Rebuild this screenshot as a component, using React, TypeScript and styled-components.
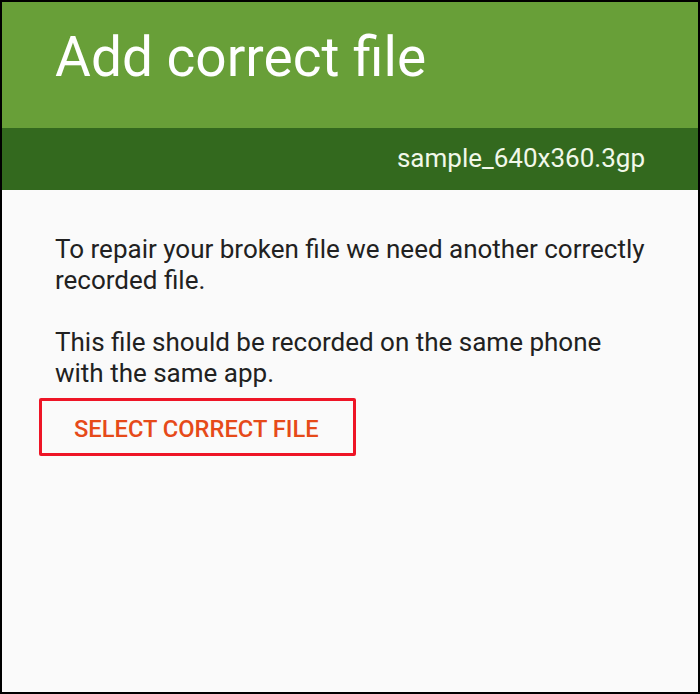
import React from 'react';
import styled, { createGlobalStyle } from 'styled-components';

const GlobalStyle = createGlobalStyle`
  html, body {
    margin: 0;
    padding: 0;
    background: #000;
  }
  * {
    box-sizing: border-box;
  }
`;

const Screen = styled.div`
  width: 700px;
  height: 694px;
  border: 2px solid #000;
  background: #fafafa;
  display: flex;
  flex-direction: column;
  font-family: Roboto, 'Liberation Sans', sans-serif;
  overflow: hidden;
`;

const TitleBar = styled.header`
  height: 126px;
  background: #689f38;
  padding: 0 53px;
  display: flex;
  align-items: flex-start;
`;

const Title = styled.h1`
  margin: 23px 0 0;
  font-size: 55px;
  font-weight: 400;
  line-height: 64px;
  color: #fff;
`;

const FileBar = styled.div`
  height: 62px;
  background: #33691e;
  padding: 0 53px;
  display: flex;
  align-items: center;
  justify-content: flex-end;
`;

const FileName = styled.span`
  font-size: 26px;
  color: #f1f8e9;
  line-height: 30px;
  margin-top: -2px;
`;

const Body = styled.main`
  flex: 1;
  padding: 44px 53px 0;
  display: flex;
  flex-direction: column;
  align-items: flex-start;
`;

const Paragraph = styled.p`
  margin: 0 0 31px;
  font-size: 26px;
  line-height: 31px;
  color: #212121;

  &:last-of-type {
    margin-bottom: 9px;
  }
`;

const SelectButton = styled.button`
  margin-left: -16px;
  width: 317px;
  height: 58px;
  border: 3px solid #ee1526;
  border-radius: 2px;
  background: transparent;
  color: #e64a19;
  font-family: Roboto, 'Liberation Sans', sans-serif;
  font-size: 23.7px;
  font-weight: 500;
  text-transform: uppercase;
  display: flex;
  align-items: center;
  padding: 4px 0 0 32px;
  cursor: pointer;
`;

export default function App() {
  return (
    <>
      <GlobalStyle />
      <Screen>
        <TitleBar>
          <Title>Add correct file</Title>
        </TitleBar>
        <FileBar>
          <FileName>sample_640x360.3gp</FileName>
        </FileBar>
        <Body>
          <Paragraph>
            To repair your broken file we need another correctly recorded file.
          </Paragraph>
          <Paragraph>
            This file should be recorded on the same phone with the same app.
          </Paragraph>
          <SelectButton>Select correct file</SelectButton>
        </Body>
      </Screen>
    </>
  );
}
